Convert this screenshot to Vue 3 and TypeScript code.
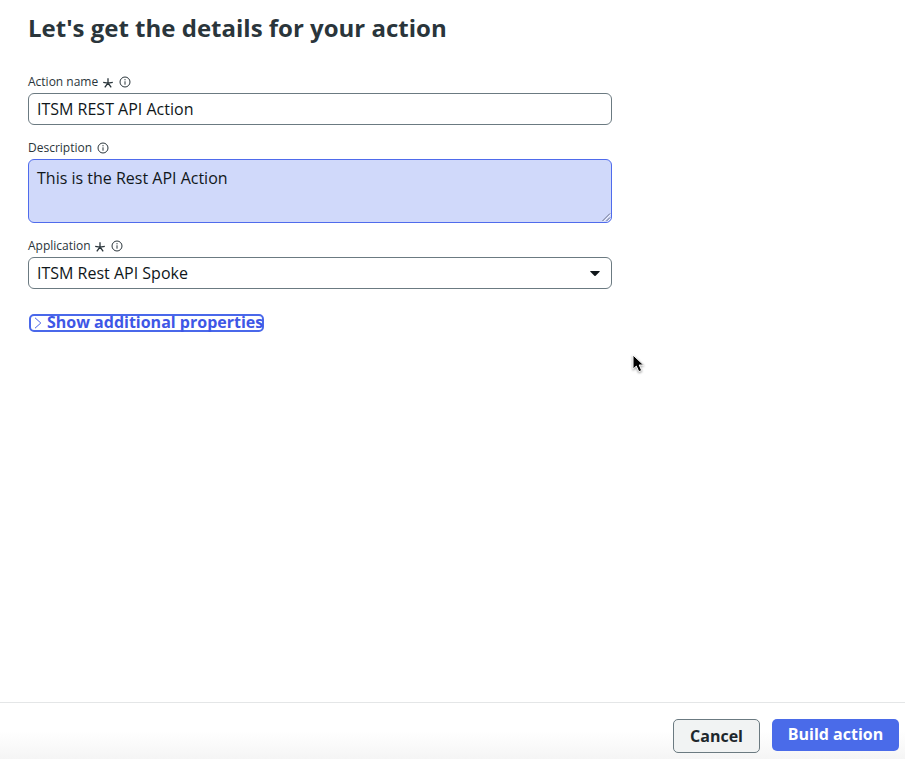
<script setup lang="ts">
import { ref } from 'vue'

const actionName = ref('ITSM REST API Action')
const description = ref('This is the Rest API Action')
const application = ref('ITSM Rest API Spoke')
</script>

<template>
  <div class="page">
    <main class="content">
      <h1 class="title">Let's get the details for your action</h1>

      <div class="field">
        <label class="label" for="name">
          <span>Action name</span>
          <svg class="required" viewBox="0 0 10 10"><path d="M5 .2V5.2M.2 4.3L5 5.2l4.8-.9M5 5L1.8 9.4M5 5l3.2 4.4" /></svg>
          <svg class="info" viewBox="0 0 12 12"><circle cx="6" cy="6" r="5" /><path d="M6 5.3v3.4" /><path d="M6 3.1v1.2" /></svg>
        </label>
        <input id="name" v-model="actionName" class="control" type="text" />
      </div>

      <div class="field">
        <label class="label" for="description">
          <span>Description</span>
          <svg class="info" viewBox="0 0 12 12"><circle cx="6" cy="6" r="5" /><path d="M6 5.3v3.4" /><path d="M6 3.1v1.2" /></svg>
        </label>
        <div class="area-wrap">
          <textarea id="description" v-model="description" class="control area"></textarea>
          <svg class="grip" viewBox="0 0 9 9"><path class="light" d="M1.5 8.5l7-7M5.5 8.5l3-3" /><path d="M.5 8l7.5-7.5M4.5 8L8 4.5" /></svg>
        </div>
      </div>

      <div class="field">
        <label class="label">
          <span>Application</span>
          <svg class="required" viewBox="0 0 10 10"><path d="M5 .2V5.2M.2 4.3L5 5.2l4.8-.9M5 5L1.8 9.4M5 5l3.2 4.4" /></svg>
          <svg class="info" viewBox="0 0 12 12"><circle cx="6" cy="6" r="5" /><path d="M6 5.3v3.4" /><path d="M6 3.1v1.2" /></svg>
        </label>
        <button class="control select" type="button">
          <span>{{ application }}</span>
          <svg class="caret" viewBox="0 0 10 5"><path d="M.7 0h8.6q.9 0 .3.7L5.6 4.7q-.6.5-1.2 0L.4.7Q-.2 0 .7 0z" /></svg>
        </button>
      </div>

      <button class="more" type="button">
        <svg class="chevron" viewBox="0 0 8 12"><path d="M1 .8L6.8 6 1 11.2" /></svg>
        <span>Show additional properties</span>
      </button>
    </main>

    <footer class="footer">
      <button class="btn cancel" type="button">Cancel</button>
      <button class="btn build" type="button">Build action</button>
    </footer>

    <svg class="pointer" viewBox="0 0 16 22">
      <path d="M2 1v14.2l3.3-3.1 2.5 5.6 2.9-1.2-2.5-5.5h4.4z" />
    </svg>
  </div>
</template>

<style>
body {
  background: #fff;
}
</style>

<style scoped>
.page {
  position: relative;
  display: flex;
  flex-direction: column;
  height: 759px;
  box-sizing: border-box;
  overflow: hidden;
  font-family: "Open Sans", "Noto Sans", sans-serif;
  color: #2a353b;
}
.content {
  flex: 1;
  display: flex;
  flex-direction: column;
  align-items: flex-start;
  padding: 12px 28px 0;
}
.title {
  margin: 0 0 30px;
  font-size: 24px;
  line-height: 32px;
  font-weight: 700;
  white-space: nowrap;
}
.field {
  width: 584px;
  margin-bottom: 15px;
}
.label {
  display: flex;
  align-items: center;
  height: 16px;
  margin-bottom: 3px;
  font-size: 12px;
  line-height: 16px;
}
.required {
  width: 10px;
  height: 10px;
  margin: 2px 0 0 4.5px;
  fill: none;
  stroke: #2a353b;
  stroke-width: 1.3;
}
.info {
  width: 12px;
  height: 12px;
  margin: 0 0 0 6px;
  fill: none;
  stroke: #2a353b;
  stroke-width: 1;
}
.label span + .info {
  margin-left: 4.5px;
}
.control {
  display: block;
  box-sizing: border-box;
  width: 100%;
  height: 32px;
  margin: 0;
  padding: 0 8px;
  border: 1px solid #6b7a81;
  border-radius: 6px;
  background: #fff;
  outline: none;
  font-family: inherit;
  font-size: 16px;
  line-height: 24px;
  color: #10171a;
}
.area-wrap {
  position: relative;
}
.area {
  height: 64px;
  padding: 6px 8px;
  resize: none;
  border-color: #4f6bec;
  background: #d0d9fa;
}
.grip {
  position: absolute;
  right: 1px;
  bottom: 1px;
  width: 9px;
  height: 9px;
  fill: none;
  stroke: #59617b;
  stroke-width: 0.9;
}
.grip .light {
  stroke: #f5f7ff;
}
.select {
  display: flex;
  align-items: center;
  justify-content: space-between;
  padding-right: 11px;
  text-align: left;
}
.caret {
  width: 10px;
  height: 5px;
  fill: #10171a;
}
.more {
  display: flex;
  align-items: center;
  box-sizing: border-box;
  width: 235px;
  height: 18px;
  margin: 10px 0 0 1px;
  padding: 0 0 0 3px;
  border: 2px solid #4a68ea;
  border-radius: 5px;
  background: transparent;
  font-family: inherit;
  font-size: 16px;
  font-weight: 700;
  line-height: 16px;
  color: #3e57e6;
  white-space: nowrap;
}
.more span {
  margin-top: -3px;
}
.chevron {
  flex: none;
  width: 8px;
  height: 12px;
  margin-right: 5px;
  fill: none;
  stroke: #4a63e8;
  stroke-width: 1;
}
.footer {
  display: flex;
  justify-content: flex-end;
  align-items: flex-start;
  gap: 12px;
  box-sizing: border-box;
  height: 57px;
  padding: 16px 6px 0 0;
  border-top: 1px solid #e4e6e7;
  background: linear-gradient(#fff 50%, #f5f5f5);
}
.btn {
  box-sizing: border-box;
  height: 32px;
  padding: 0;
  border: 0;
  border-radius: 5px;
  font-family: inherit;
  font-size: 16px;
  font-weight: 700;
  line-height: 30px;
}
.cancel {
  width: 87px;
  height: 34px;
  border: 1px solid #6b7a81;
  background: #f1f3f3;
  color: #1d272c;
}
.build {
  width: 127px;
  padding-bottom: 2px;
  background: #4a6be9;
  color: #fff;
}
.pointer {
  position: absolute;
  left: 631px;
  top: 354px;
  width: 16px;
  height: 22px;
  fill: #000;
  stroke: #fff;
  stroke-width: 1;
  filter: drop-shadow(0 1px 1px rgb(0 0 0 / 40%));
}
</style>
